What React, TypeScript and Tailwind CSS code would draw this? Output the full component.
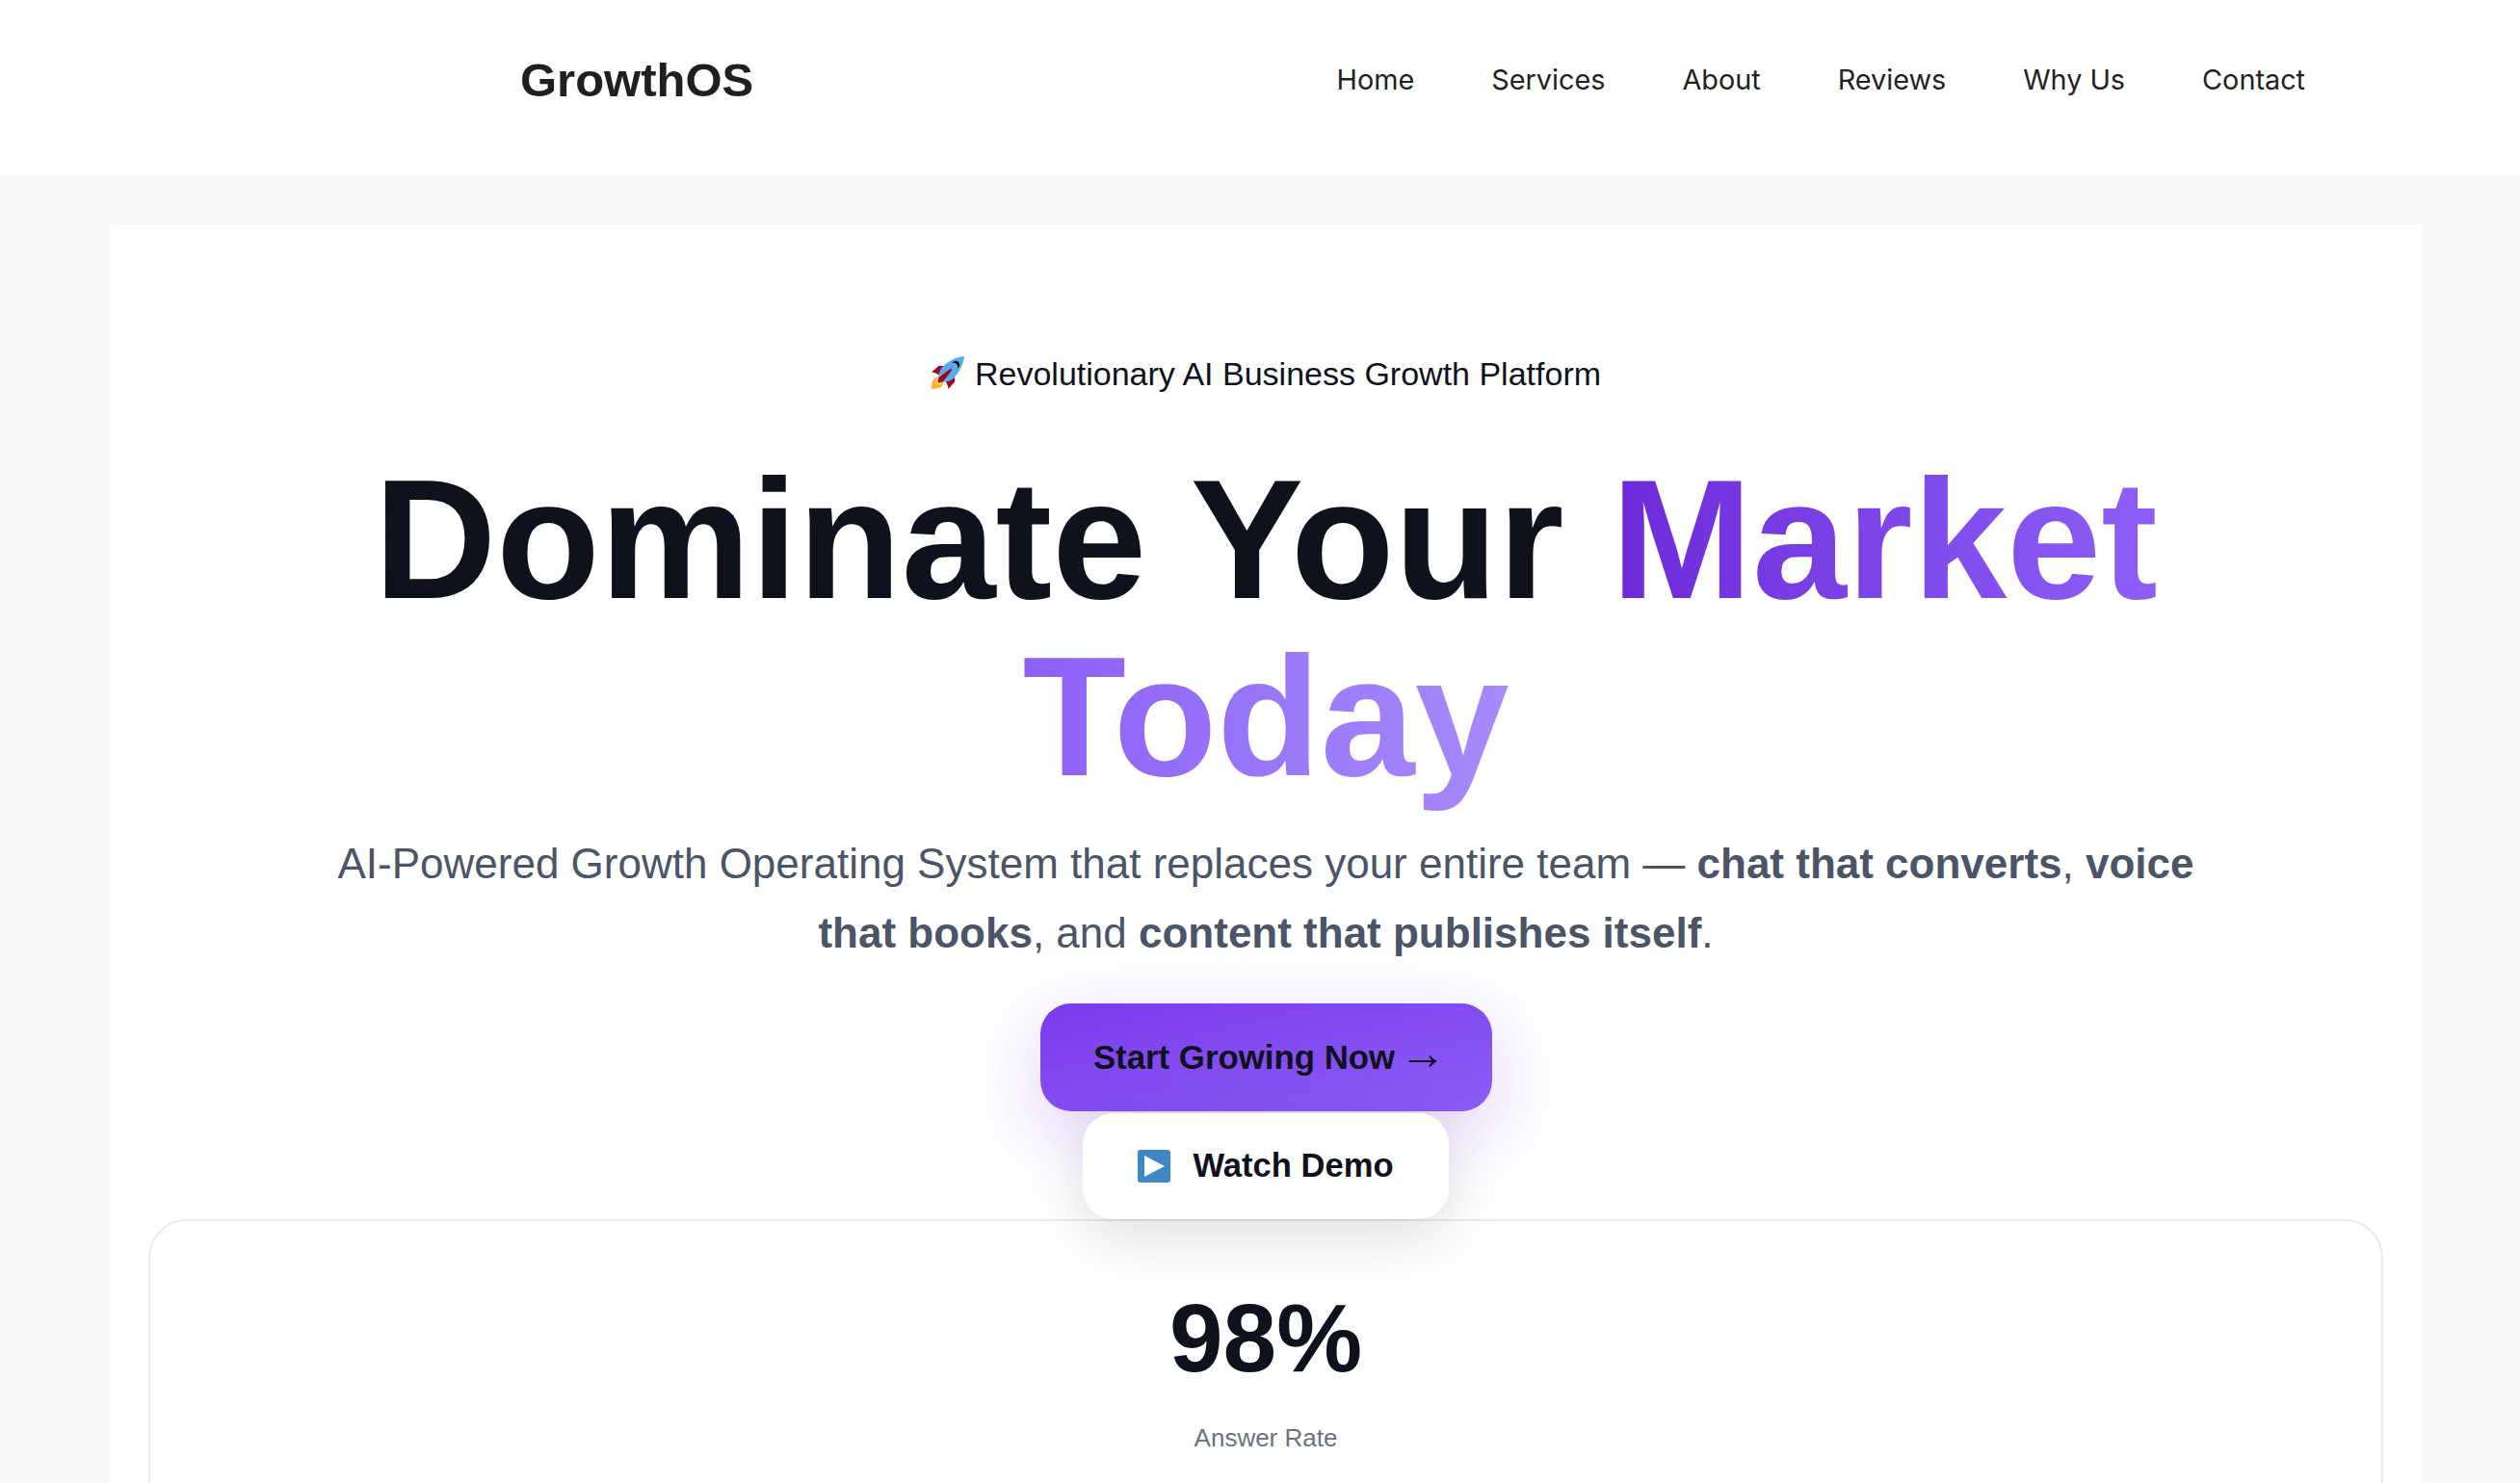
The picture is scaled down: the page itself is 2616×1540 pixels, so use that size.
export default function App() {
  const links = ["Home", "Services", "About", "Reviews", "Why Us", "Contact"];
  return (
    <div className="h-[1540px] overflow-hidden bg-[#f7f8fa] font-['Liberation_Sans',Arial,sans-serif] text-[#0f121c]">
      <header className="flex h-[182px] items-center justify-between bg-white pb-[16px] pl-[540px] pr-[223px]">
        <div className="text-[49px] font-bold leading-none text-[#1f1f1f]">GrowthOS</div>
        <nav className="flex gap-[80px] font-['Inter',sans-serif] text-[28.8px] text-[#222222]">
          {links.map((l) => (
            <a key={l}>{l}</a>
          ))}
        </nav>
      </header>
      <main className="mx-[114px] mt-[51px] min-h-[1400px] w-[2400px] bg-white px-[40px] pt-[130px]">
        <div className="flex items-center justify-center gap-[11px] text-[34px] leading-[50px]">
          <svg viewBox="0 0 36 36" className="-mt-[2px] h-[35px] w-[35px]">
            <path fill="#A0041E" d="M1 17l8-7 16 1 1 16-7 8s.001-5.999-6-12-12-6-12-6z" />
            <path fill="#FFAC33" d="M.973 35s-.036-7.979 2.985-11S15 21.187 15 21.187 14.999 29 11.999 32c-3 3-11.026 3-11.026 3z" />
            <circle fill="#FFCC4D" cx="8.999" cy="27" r="4" />
            <path fill="#55ACEE" d="M35.999 0s-10 0-22 10c-6 5-6 14-4 16s11 2 16-4c10-12 10-22 10-22z" />
            <path fill="#000" d="M26.999 5c-1.623 0-3.013.971-3.641 2.36.502-.227 1.055-.36 1.641-.36 2.209 0 4 1.791 4 4 0 .586-.133 1.139-.359 1.64 1.389-.627 2.359-2.017 2.359-3.64 0-2.209-1.791-4-4-4z" />
            <path fill="#A0041E" d="M8 28s0-4 1-5 13.001-10.999 14-10-9.001 13-10.001 14S8 28 8 28z" />
          </svg>
          <span>Revolutionary AI Business Growth Platform</span>
        </div>
        <h1 className="mt-[55px] text-center text-[176px] font-bold leading-[184px]">
          Dominate Your{" "}
          <span className="bg-gradient-to-r from-[#6d28d9] via-[#8b5cf6] to-[#a78bfa] bg-clip-text text-transparent">
            Market Today
          </span>
        </h1>
        <p className="mx-auto mt-[25px] w-[2000px] text-center text-[44px] leading-[72px] text-[#4a5568]">
          AI-Powered Growth Operating System that replaces your entire team — <b>chat that converts</b>, <b>voice that books</b>, and <b>content that publishes itself</b>.
        </p>
        <div className="mt-[37px] flex flex-col items-center gap-[2px]">
          <button className="flex h-[112px] w-[469px] items-center justify-center gap-[5px] rounded-[32px] bg-gradient-to-br from-[#7c3aed] to-[#8b5cf6] pl-[8px] text-[34.8px] font-bold shadow-[0_24px_80px_rgba(124,58,237,0.25)]">
            Start Growing Now
            <span className="-mt-[9px] text-[48px] font-normal leading-none">→</span>
          </button>
          <button className="z-10 flex h-[110px] w-[380px] items-center justify-center gap-[23px] rounded-[32px] bg-white text-[34.6px] font-bold shadow-[0_20px_60px_rgba(0,0,0,0.12)]">
            <svg viewBox="0 0 34 34" className="h-[34px] w-[34px]">
              <rect width="34" height="34" rx="3" fill="#3f88c5" />
              <path d="M7 6l21 11L7 28z" fill="#fff" />
            </svg>
            Watch Demo
          </button>
        </div>
        <section className="h-[500px] rounded-[40px] border-2 border-[#e9eaf0] pt-[64px] text-center">
          <div className="text-[100px] font-bold leading-[115px]">98%</div>
          <div className="mt-[27px] text-[26px] text-[#6b7280]">Answer Rate</div>
        </section>
      </main>
    </div>
  );
}
